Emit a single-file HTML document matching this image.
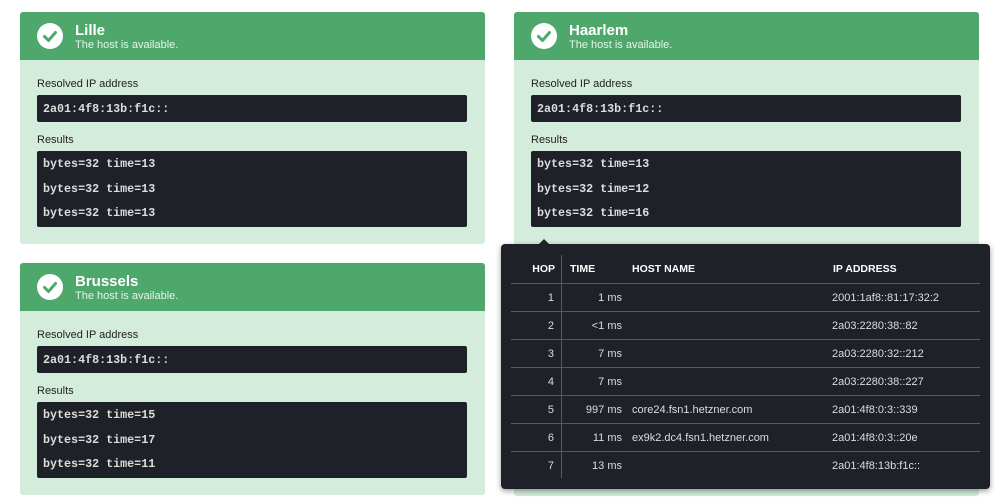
<!DOCTYPE html>
<html><head><style>
*{margin:0;padding:0;box-sizing:border-box}
body{width:1000px;height:504px;background:#fff;position:relative;overflow:hidden;font-family:"Liberation Sans",sans-serif}
.card{position:absolute;width:465px;height:232px;background:#d4ecdb;border-radius:3px;overflow:hidden}
.hd{height:48px;background:#4ea86b;position:relative;color:#fff}
.ic{position:absolute;left:17px;top:11px;width:26px;height:26px;border-radius:50%;background:#fff}
.ic svg{position:absolute;left:0;top:0}
.t{position:absolute;left:55px;top:10px;font-size:15px;font-weight:bold}
.s{position:absolute;left:55px;top:27px;font-size:11px;color:#e6f4ea}
.lb{position:absolute;left:17px;font-size:11px;color:#222}
.box{position:absolute;left:17px;width:430px;background:#1f2128;border-radius:2px;color:#ddd;font-family:"Liberation Mono",monospace;font-weight:bold;font-size:11.7px}
.box div{position:absolute;left:6px}
.tip{position:absolute;left:501px;top:244px;width:489px;height:245px;background:#1f2128;border-radius:4px;box-shadow:0 2px 6px rgba(0,0,0,.4);color:#ddd;font-size:11px}
.tip:before{content:"";position:absolute;left:38px;top:-5px;border:5px solid transparent;border-top:0;border-bottom-color:#1f2128}
.row{position:absolute;left:10px;width:469px;height:28px;border-top:1px solid #555a63}
.row span{position:absolute;top:8px}
.vl{position:absolute;left:60px;top:11px;width:1px;height:223px;background:#555a63}
</style></head><body>

<div class="card" style="left:20px;top:12px">
<div class="hd"><div class="ic"><svg width="26" height="26"><path d="M7.5 13.5l4 4 7-8" stroke="#4ea86b" stroke-width="3" fill="none" stroke-linecap="round" stroke-linejoin="round"/></svg></div><div class="t">Lille</div><div class="s">The host is available.</div></div>
<div class="lb" style="top:66px">Resolved IP address</div>
<div class="box" style="top:83px;height:27px"><div style="top:7px">2a01:4f8:13b:f1c::</div></div>
<div class="lb" style="top:122px">Results</div>
<div class="box" style="top:139px;height:76px"><div style="top:6px">bytes=32 time=13</div><div style="top:31px">bytes=32 time=13</div><div style="top:55px">bytes=32 time=13</div></div>
</div>

<div class="card" style="left:514px;top:12px;height:484px">
<div class="hd"><div class="ic"><svg width="26" height="26"><path d="M7.5 13.5l4 4 7-8" stroke="#4ea86b" stroke-width="3" fill="none" stroke-linecap="round" stroke-linejoin="round"/></svg></div><div class="t">Haarlem</div><div class="s">The host is available.</div></div>
<div class="lb" style="top:66px">Resolved IP address</div>
<div class="box" style="top:83px;height:27px"><div style="top:7px">2a01:4f8:13b:f1c::</div></div>
<div class="lb" style="top:122px">Results</div>
<div class="box" style="top:139px;height:76px"><div style="top:6px">bytes=32 time=13</div><div style="top:31px">bytes=32 time=12</div><div style="top:55px">bytes=32 time=16</div></div>
</div>

<div class="card" style="left:20px;top:263px">
<div class="hd"><div class="ic"><svg width="26" height="26"><path d="M7.5 13.5l4 4 7-8" stroke="#4ea86b" stroke-width="3" fill="none" stroke-linecap="round" stroke-linejoin="round"/></svg></div><div class="t">Brussels</div><div class="s">The host is available.</div></div>
<div class="lb" style="top:66px">Resolved IP address</div>
<div class="box" style="top:83px;height:27px"><div style="top:7px">2a01:4f8:13b:f1c::</div></div>
<div class="lb" style="top:122px">Results</div>
<div class="box" style="top:139px;height:76px"><div style="top:6px">bytes=32 time=15</div><div style="top:31px">bytes=32 time=17</div><div style="top:55px">bytes=32 time=11</div></div>
</div>

<div class="tip">
<div class="vl"></div>
<div style="position:absolute;top:19px;left:0;width:100%;font-weight:bold;font-size:10.5px;color:#fff">
<span style="position:absolute;right:435px">HOP</span><span style="position:absolute;left:69px">TIME</span><span style="position:absolute;left:131px">HOST NAME</span><span style="position:absolute;left:332px">IP ADDRESS</span></div>
<div class="row" style="top:39px"><span style="right:426px">1</span><span style="right:358px">1 ms</span><span style="left:321px">2001:1af8::81:17:32:2</span></div>
<div class="row" style="top:67px"><span style="right:426px">2</span><span style="right:358px">&lt;1 ms</span><span style="left:321px">2a03:2280:38::82</span></div>
<div class="row" style="top:95px"><span style="right:426px">3</span><span style="right:358px">7 ms</span><span style="left:321px">2a03:2280:32::212</span></div>
<div class="row" style="top:123px"><span style="right:426px">4</span><span style="right:358px">7 ms</span><span style="left:321px">2a03:2280:38::227</span></div>
<div class="row" style="top:151px"><span style="right:426px">5</span><span style="right:358px">997 ms</span><span style="left:121px">core24.fsn1.hetzner.com</span><span style="left:321px">2a01:4f8:0:3::339</span></div>
<div class="row" style="top:179px"><span style="right:426px">6</span><span style="right:358px">11 ms</span><span style="left:121px">ex9k2.dc4.fsn1.hetzner.com</span><span style="left:321px">2a01:4f8:0:3::20e</span></div>
<div class="row" style="top:207px"><span style="right:426px">7</span><span style="right:358px">13 ms</span><span style="left:321px">2a01:4f8:13b:f1c::</span></div>
</div>
</body></html>
